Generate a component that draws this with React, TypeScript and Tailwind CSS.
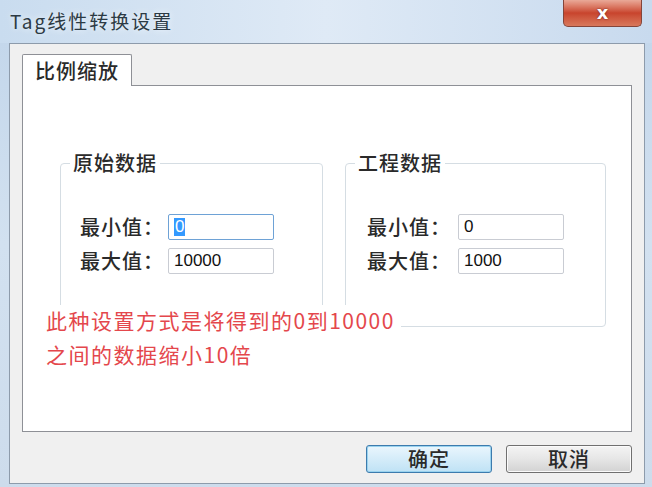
import React from "react";

const CJK = "font-['Noto_Sans_CJK_SC','Noto_Sans',sans-serif]";

function Field({ value, focused }: { value: string; focused?: boolean }) {
  return (
    <div
      className={`h-[26px] w-[106px] bg-white flex items-center pl-[5px] text-[17px] text-[#111] font-['Liberation_Sans',sans-serif] rounded-[2px] border ${
        focused ? "border-[#6ea2d6]" : "border-[#c9ccd3]"
      }`}
    >
      {focused ? <span className="bg-[#3399ff] text-white leading-[18px] px-px">{value}</span> : value}
    </div>
  );
}

function Row({ label, value, focused, labelW, pl }: { label: string; value: string; focused?: boolean; labelW: string; pl: string }) {
  return (
    <div className={`flex items-center ${pl}`}>
      <div className={`${labelW} text-[20px] leading-[26px] tracking-[1px] font-medium text-[#2a2a2a]`}>{label}</div>
      <Field value={value} focused={focused} />
    </div>
  );
}

function Group({ title, width, children }: { title: string; width: string; children: React.ReactNode }) {
  return (
    <div className={`relative ${width} h-[164px] border border-[#d5dde3] rounded-[4px]`}>
      <div className="absolute left-[9px] top-[-14px] bg-white px-[3px] text-[20px] leading-[26px] tracking-[1px] font-medium text-[#2a2a2a]">
        {title}
      </div>
      <div className="pt-[50px] flex flex-col gap-[8px]">{children}</div>
    </div>
  );
}

export default function App() {
  return (
    <div className={`w-[652px] h-[487px] overflow-hidden flex flex-col bg-gradient-to-b from-[#c1d5ea] via-[#d2e1f0] to-[#cddcec] ${CJK}`}>
      <div className="h-[43px] shrink-0 flex justify-between items-start bg-gradient-to-r from-[#c9dcef] via-[#dfeaf6] to-[#c8daee]">
        <div className="pl-[10px] pt-[8px] text-[19px] leading-[26px] tracking-[2px] text-[#2c3a44] [text-shadow:0_0_6px_#f4f8fc]">Tag线性转换设置</div>
        <div className="mr-[10px] w-[79px] h-[27px] rounded-b-[5px] border border-t-0 border-[#84453a] bg-gradient-to-b from-[#e9a998] via-[#c8442d] to-[#d8785c] flex items-center justify-center text-white font-['DejaVu_Sans',sans-serif] font-bold text-[18px] leading-none [text-shadow:0_0_2px_#5a1c12]">
          x
        </div>
      </div>

      <div className="ml-[9px] mr-[7px] mb-[3px] flex-1 border border-[#8d9bab] bg-[#f0f0f0] flex flex-col">
        <div className="pl-[12px] pt-[10px] flex">
          <div className="relative z-10 -mb-px w-[110px] h-[32px] border border-b-0 border-[#8e9096] bg-white flex items-center justify-center text-[20px] tracking-[1px] font-medium text-[#2a2a2a] rounded-t-[2px]">
            比例缩放
          </div>
        </div>
        <div className="relative mx-[12px] h-[347px] border border-[#8e9096] bg-white">
          <div className="flex pl-[37px] pt-[77px] gap-[22px]">
            <Group title="原始数据" width="w-[263px]">
              <Row label="最小值：" value="0" focused labelW="w-[88px]" pl="pl-[19px]" />
              <Row label="最大值：" value="10000" labelW="w-[88px]" pl="pl-[19px]" />
            </Group>
            <Group title="工程数据" width="w-[261px]">
              <Row label="最小值：" value="0" labelW="w-[91px]" pl="pl-[21px]" />
              <Row label="最大值：" value="1000" labelW="w-[91px]" pl="pl-[21px]" />
            </Group>
          </div>
          <div className="absolute left-[17px] top-[219px] bg-white px-[6px] text-[21px] leading-[30px] tracking-[1.5px] text-[#e4474c]">
            此种设置方式是将得到的0到10000
          </div>
          <div className="absolute left-[17px] top-[253px] px-[6px] text-[21px] leading-[30px] tracking-[1.5px] text-[#e4474c]">
            之间的数据缩小10倍
          </div>
        </div>
        <div className="flex justify-end gap-[14px] pr-[12px] pt-[13px]">
          <div className="w-[126px] h-[28px] rounded-[3px] border border-[#3d7bad] bg-gradient-to-b from-[#eaf6fd] to-[#bfe2f5] shadow-[inset_0_0_0_1px_#9ad3ef] flex items-center justify-center text-[20px] tracking-[1px] font-medium text-[#2a2a2a]">
            确定
          </div>
          <div className="w-[126px] h-[28px] rounded-[3px] border border-[#707070] bg-gradient-to-b from-[#f4f4f4] via-[#e6e6e6] to-[#d2d2d2] shadow-[inset_0_0_0_1px_#fbfbfb] flex items-center justify-center text-[20px] tracking-[1px] font-medium text-[#2a2a2a]">
            取消
          </div>
        </div>
      </div>
    </div>
  );
}
